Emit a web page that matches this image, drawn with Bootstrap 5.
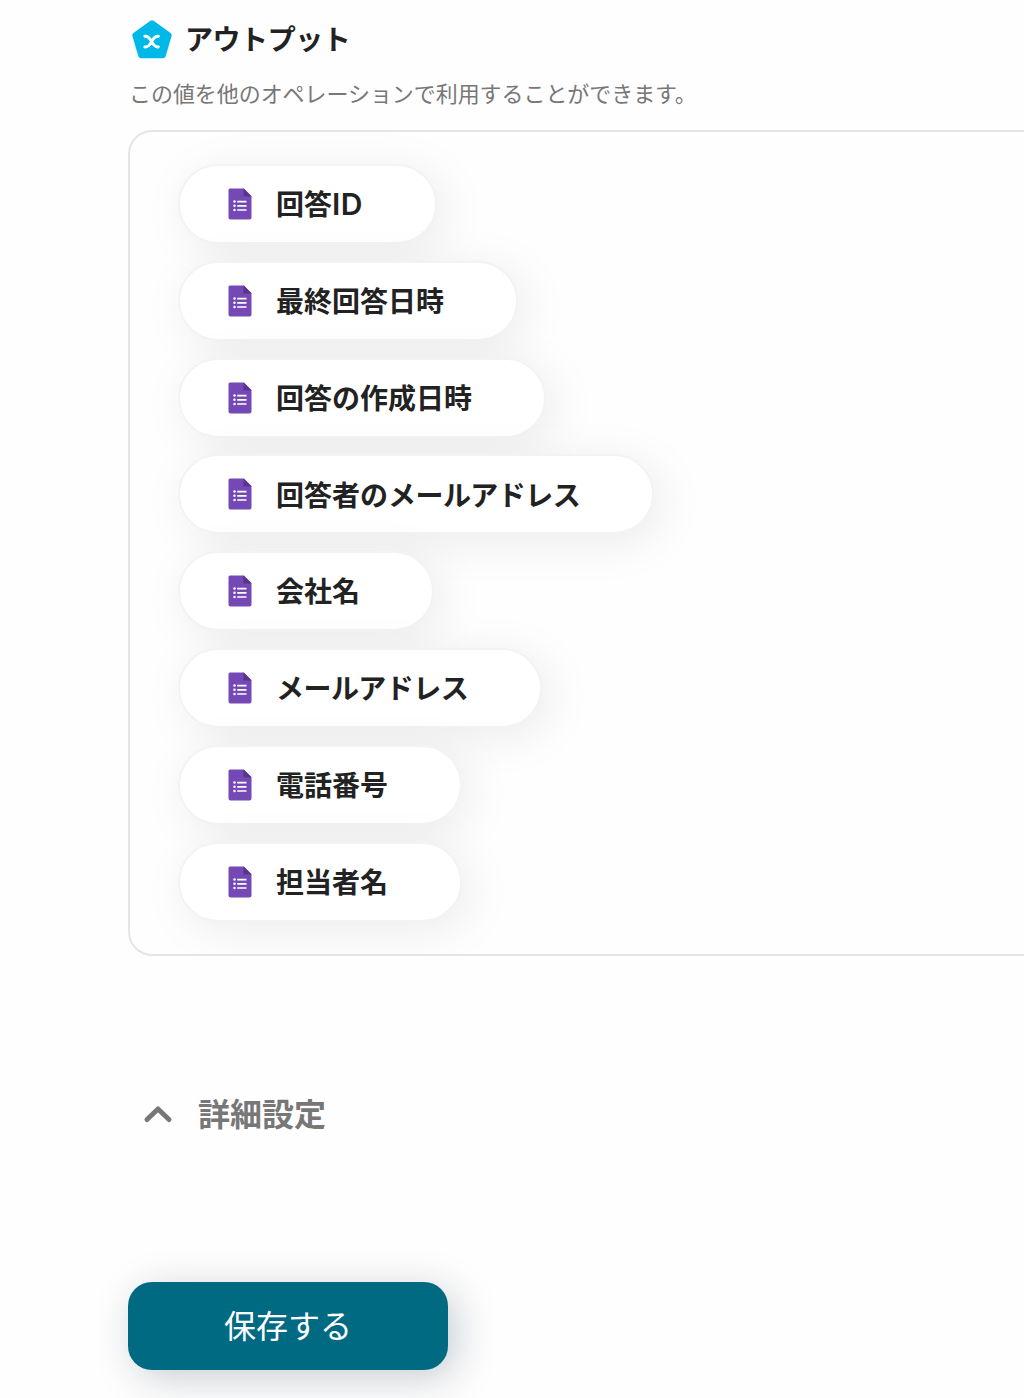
<!DOCTYPE html>
<html lang="ja">
<head>
<meta charset="utf-8">
<meta name="viewport" content="width=device-width, initial-scale=1">
<title>アウトプット</title>
<link rel="stylesheet" href="https://cdn.jsdelivr.net/npm/bootstrap@5.3.0/dist/css/bootstrap.min.css">
<style>
body{background:#fefefe;color:#222;font-family:"Noto Sans CJK JP",sans-serif;overflow:hidden;height:1398px}
.page-main{padding:16px 0 0 128px}
.title-text{font-size:28px;line-height:42px;padding-bottom:5px;margin-left:9px;letter-spacing:-.45px}
.note-text{font-size:22px;line-height:32px;color:#777;margin-top:12px;padding-left:1px;letter-spacing:-.06px}
.output-box{margin-top:22px;height:826px;border:2px solid #e5e5e5;border-right:0;border-radius:24px 0 0 24px;padding:32px 0 0 48px;gap:16.8px}
.pill{height:80px;border:2px solid #f3f3f3;border-radius:40px;background:#fff;padding:0 72px 0 48px;box-shadow:8px 8px 48px rgba(0,0,0,.08);font-size:28px;line-height:40px}
.pill svg{margin-right:24px}
.pill > span{padding-bottom:1.500px}
.kana{letter-spacing:-.55px}
.latin{font-family:Inter,sans-serif;font-weight:600;font-size:30px;line-height:1;letter-spacing:.5px}
.detail-toggle{margin:135px 0 0 14px;color:#777;font-size:32px;line-height:46px}
.detail-toggle span{padding-bottom:2px;margin-top:-2px}
.detail-toggle svg{margin-right:24px}
.save-btn{width:320px;height:88px;margin-top:145px;border-radius:24px;background:#006a83;color:#fff;font-size:32px;box-shadow:8px 8px 40px rgba(0,32,48,.22)}
.save-btn span{display:block;padding-bottom:4px}
.save-btn:hover{background:#005d73;color:#fff}
</style>
<script src="https://cdn.jsdelivr.net/npm/bootstrap@5.3.0/dist/js/bootstrap.bundle.min.js"></script>
</head>
<body>
<svg class="d-none" aria-hidden="true">
  <symbol id="form-icon" viewBox="0 0 24 32">
    <path d="M2 .5h14l7.500 7.500V29.500a2 2 0 0 1-2 2H2.500a2 2 0 0 1-2-2V2A1.500 1.500 0 0 1 2 .5Z" fill="#7549b5"/>
    <path d="M15.500.5 23.500 8.500H15.500Z" fill="#56358a"/>
    <path d="M9.200 13.600h9.300M9.200 17.800h9.300M9.200 22h9.300" stroke="#fff" stroke-width="1.700"/>
    <g fill="#fff"><circle cx="6.500" cy="13.600" r="1.250"/><circle cx="6.500" cy="17.800" r="1.250"/><circle cx="6.500" cy="22" r="1.250"/></g>
  </symbol>
</svg>
<main class="page-main">
  <h1 class="d-flex align-items-center m-0 fw-bold">
    <svg width="48" height="48" viewBox="0 0 48 48" aria-hidden="true">
      <path d="M24 7 41 19.300 35 39.500H13L7 19.300Z" fill="#00b9e8" stroke="#00b9e8" stroke-width="5.500" stroke-linejoin="round"/>
      <path d="M16.800 20.200h.8c3.200 0 4 2.200 6 5.400s2.800 5.400 6 5.400h.8M30.400 20.200h-.8c-3.200 0-4 2.200-6 5.400s-2.800 5.400-6 5.400h-.8" fill="none" stroke="#fff" stroke-width="2.900" stroke-linecap="round"/>
    </svg>
    <span class="title-text">アウトプット</span>
  </h1>
  <p class="note-text mb-0">この値を他のオペレーションで利用することができます。</p>
  <section class="output-box d-flex flex-column align-items-start overflow-hidden">
    <div class="pill d-inline-flex align-items-center fw-bold flex-shrink-0"><svg width="24" height="32"><use href="#form-icon"/></svg><span>回答<span class="latin">ID</span></span></div>
    <div class="pill d-inline-flex align-items-center fw-bold flex-shrink-0"><svg width="24" height="32"><use href="#form-icon"/></svg><span>最終回答日時</span></div>
    <div class="pill d-inline-flex align-items-center fw-bold flex-shrink-0"><svg width="24" height="32"><use href="#form-icon"/></svg><span>回答の作成日時</span></div>
    <div class="pill d-inline-flex align-items-center fw-bold flex-shrink-0"><svg width="24" height="32"><use href="#form-icon"/></svg><span>回答者の<span class="kana">メールアドレス</span></span></div>
    <div class="pill d-inline-flex align-items-center fw-bold flex-shrink-0"><svg width="24" height="32"><use href="#form-icon"/></svg><span>会社名</span></div>
    <div class="pill d-inline-flex align-items-center fw-bold flex-shrink-0"><svg width="24" height="32"><use href="#form-icon"/></svg><span class="kana">メールアドレス</span></div>
    <div class="pill d-inline-flex align-items-center fw-bold flex-shrink-0"><svg width="24" height="32"><use href="#form-icon"/></svg><span>電話番号</span></div>
    <div class="pill d-inline-flex align-items-center fw-bold flex-shrink-0"><svg width="24" height="32"><use href="#form-icon"/></svg><span>担当者名</span></div>
  </section>
  <div class="detail-toggle d-flex align-items-center fw-bold">
    <svg width="32" height="32" viewBox="0 0 32 32" fill="none" stroke="#777" stroke-width="5" stroke-linecap="round" stroke-linejoin="round" aria-hidden="true"><path d="M5 21.500 16 11l11 10.500"/></svg>
    <span>詳細設定</span>
  </div>
  <button type="button" class="save-btn btn border-0 p-0 d-block"><span>保存する</span></button>
</main>
</body>
</html>
